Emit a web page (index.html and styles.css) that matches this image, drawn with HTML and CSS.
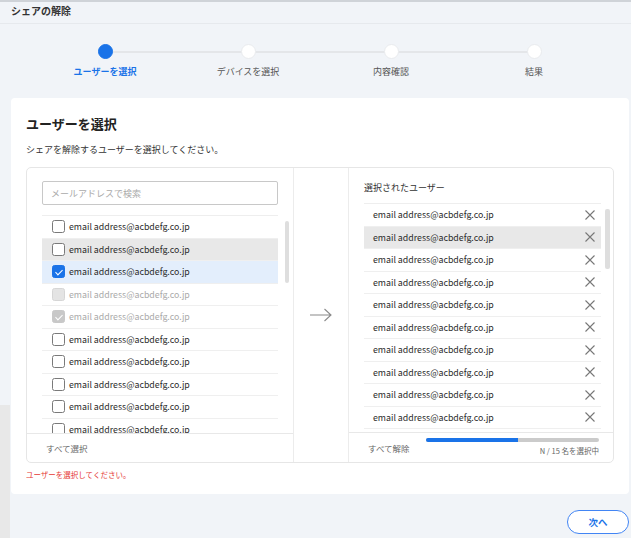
FILE: index.html
```html
<!DOCTYPE html>
<html lang="ja">
<head>
  <meta charset="UTF-8">
  <meta name="viewport" content="width=device-width, initial-scale=1.0">
  <title>シェアの解除</title>
  <link rel="stylesheet" href="styles.css">
</head>
<body>
  <div class="topbar">シェアの解除</div>

  <div class="stepper">
    <div class="step active"><span class="dot"></span><span class="label">ユーザーを選択</span></div>
    <div class="step"><span class="dot"></span><span class="label">デバイスを選択</span></div>
    <div class="step"><span class="dot"></span><span class="label">内容確認</span></div>
    <div class="step"><span class="dot"></span><span class="label">結果</span></div>
  </div>

  <div class="card">
    <h2>ユーザーを選択</h2>
    <p class="lead">シェアを解除するユーザーを選択してください。</p>

    <div class="picker">
      <!-- 候補ユーザー -->
      <div class="pane">
        <div class="search"><input type="text" placeholder="メールアドレスで検索"></div>
        <div class="list-wrap">
          <ul class="list" id="userList"></ul>
          <div class="scrollbar"></div>
        </div>
        <div class="pane-foot">すべて選択</div>
      </div>

      <div class="arrow">
        <svg width="24" height="14" viewBox="0 0 24 14"><path d="M1 7H22M15.5 1L22 7L15.5 13" fill="none" stroke="#8a8a8a" stroke-width="1.1"/></svg>
      </div>

      <!-- 選択済みユーザー -->
      <div class="pane">
        <div class="pane-title">選択されたユーザー</div>
        <div class="list-wrap right">
          <ul class="list" id="selectedList"></ul>
          <div class="scrollbar"></div>
        </div>
        <div class="pane-foot">
          <span>すべて解除</span>
          <div class="progress">
            <div class="bar"><div class="fill" style="width: 53%"></div></div>
            <div class="count">N / 15 名を選択中</div>
          </div>
        </div>
      </div>
    </div>

    <p class="error">ユーザーを選択してください。</p>
  </div>

  <div class="actions">
    <button class="next">次へ</button>
  </div>

  <script>
    const email = 'email address@acbdefg.co.jp';
    const userList = document.getElementById('userList');
    const selectedList = document.getElementById('selectedList');

    // 行の状態: '' / hover / checked / disabled / disabled checked
    const states = ['', 'hover', 'checked', 'disabled', 'disabled checked', '', '', '', '', ''];
    states.forEach(state => {
      const li = document.createElement('li');
      li.className = 'row ' + state;
      li.innerHTML = '<span class="box"></span><span class="mail">' + email + '</span>';
      userList.appendChild(li);
    });

    for (let i = 0; i < 11; i++) {
      const li = document.createElement('li');
      li.className = 'row' + (i === 1 ? ' hover' : '');
      li.innerHTML = '<span class="mail">' + email + '</span>' +
        '<svg class="remove" width="10" height="10" viewBox="0 0 10 10"><path d="M0.5 0.5L9.5 9.5M9.5 0.5L0.5 9.5" stroke="#777" stroke-width="1.1"/></svg>';
      selectedList.appendChild(li);
    }
  </script>
</body>
</html>
```

FILE: styles.css
```css
* {
  box-sizing: border-box;
}
body {
  margin: 0;
  font-family: "Noto Sans CJK JP", "Noto Sans", sans-serif;
  color: #333;
  background: linear-gradient(#e8e8e8, #e8e8e8) left 405px / 10px 100% no-repeat, #f1f4f8;
  min-height: 538px;
}
.topbar {
  height: 24px;
  border-top: 2px solid #cfd3d8;
  border-bottom: 1px solid #e6e9ed;
  padding-left: 11px;
  font-size: 10px;
  font-weight: bold;
  line-height: 18px;
  color: #333;
}
.stepper {
  display: flex;
  padding: 20px 0 20px 33.5px;
}
.step {
  position: relative;
  width: 143px;
  display: flex;
  flex-direction: column;
  align-items: center;
}
.step + .step::before {
  content: "";
  position: absolute;
  top: 6.5px;
  left: -50%;
  width: 100%;
  height: 2px;
  background: #e4e6e9;
}
.dot {
  position: relative;
  z-index: 1;
  width: 15px;
  height: 15px;
  border-radius: 50%;
  background: #fff;
  border: 1px solid #e9ebee;
}
.step.active .dot {
  background: #1a73e8;
  border-color: #1a73e8;
}
.label {
  margin-top: 7px;
  font-size: 9px;
  line-height: 12px;
  color: #555;
}
.step.active .label {
  color: #1a73e8;
  font-weight: bold;
}
.card {
  margin-left: 11px;
  width: 618px;
  background: #fff;
  border-radius: 4px;
  padding: 16px 15px 13px;
}
.card h2 {
  margin: 0;
  font-size: 13px;
  line-height: 20px;
  color: #222;
}
.lead {
  margin: 9px 0 10px;
  font-size: 9px;
  line-height: 14px;
  color: #333;
}
.picker {
  display: grid;
  grid-template-columns: 267px 55px 1fr;
  height: 296px;
  border: 1px solid #e6e6e6;
  border-radius: 5px;
}
.pane {
  display: flex;
  flex-direction: column;
  min-height: 0;
}
.pane:first-child {
  border-right: 1px solid #ececec;
}
.search {
  padding: 13px 15px 0;
}
.search input {
  display: block;
  width: 236px;
  height: 24px;
  border: 1px solid #c8c8c8;
  border-radius: 2px;
  padding: 0 8px;
  font-family: inherit;
  font-size: 9px;
  color: #333;
}
.search input::placeholder {
  color: #aaa;
}
.list-wrap {
  display: flex;
  margin: 10px 0 0 15px;
  height: 218px;
}
.list {
  list-style: none;
  margin: 0;
  padding: 0;
  width: 236px;
  overflow: hidden;
  border-top: 1px solid #eee;
}
.scrollbar {
  width: 4px;
  height: 62px;
  margin: 6px 0 0 7px;
  border-radius: 2px;
  background: #dedede;
}
.row {
  display: flex;
  align-items: center;
  height: 22.5px;
  flex-shrink: 0;
  padding-left: 10px;
  border-bottom: 1px solid #efefef;
  font-size: 8.8px;
  color: #2b2b2b;
}
.row.hover {
  background: #e8e8e8;
}
.row.checked {
  background: #e3eefc;
}
.box {
  width: 13px;
  height: 13px;
  margin-right: 4px;
  border: 1px solid #7a7a7a;
  border-radius: 2.5px;
  background: #fff;
  position: relative;
}
.row.checked .box {
  background: #1a73e8;
  border-color: #1a73e8;
}
.row.disabled {
  color: #aaa;
}
.row.disabled .box {
  background: #e4e4e4;
  border-color: #d6d6d6;
}
.row.disabled.checked {
  background: none;
}
.row.disabled.checked .box {
  background: #c8c8c8;
  border-color: #c8c8c8;
}
.row.checked .box::after {
  content: "";
  position: absolute;
  left: 3.5px;
  top: 1.5px;
  width: 3px;
  height: 6px;
  border: solid #fff;
  border-width: 0 1.5px 1.5px 0;
  transform: rotate(45deg);
}
.pane-foot {
  flex: 1;
  display: flex;
  align-items: center;
  padding-left: 19px;
  border-top: 1px solid #e8e8e8;
  font-size: 8.5px;
  color: #666;
}
.arrow {
  display: flex;
  align-items: center;
  justify-content: center;
  border-right: 1px solid #ececec;
}
.pane-title {
  padding: 13px 15px 0;
  font-size: 9px;
  line-height: 14px;
  color: #333;
}
.list-wrap.right {
  margin-top: 8px;
  height: 229px;
}
.list-wrap.right .list {
  width: 237px;
}
.list-wrap.right .scrollbar {
  width: 5px;
  height: 60px;
  margin-left: 4px;
}
.list-wrap.right .row {
  justify-content: space-between;
  padding: 0 6px 0 9px;
}
.pane-foot .progress {
  margin-left: auto;
  margin-right: 14px;
  width: 173px;
  align-self: flex-start;
  padding-top: 5px;
}
.bar {
  height: 4px;
  border-radius: 2px;
  background: #cbcbcb;
  overflow: hidden;
}
.fill {
  height: 100%;
  background: #1a73e8;
}
.count {
  margin-top: 4px;
  text-align: right;
  font-size: 7.5px;
  line-height: 10px;
  color: #666;
}
.error {
  margin: 6px 0 0;
  font-size: 7.5px;
  line-height: 12px;
  color: #e53935;
}
.actions {
  display: flex;
  justify-content: flex-end;
  padding: 16px 2px 0 0;
}
.next {
  width: 62px;
  height: 24px;
  border: 1.5px solid #4285f4;
  border-radius: 12px;
  background: #fff;
  font-family: inherit;
  font-size: 9.5px;
  font-weight: bold;
  color: #1a73e8;
}
```
